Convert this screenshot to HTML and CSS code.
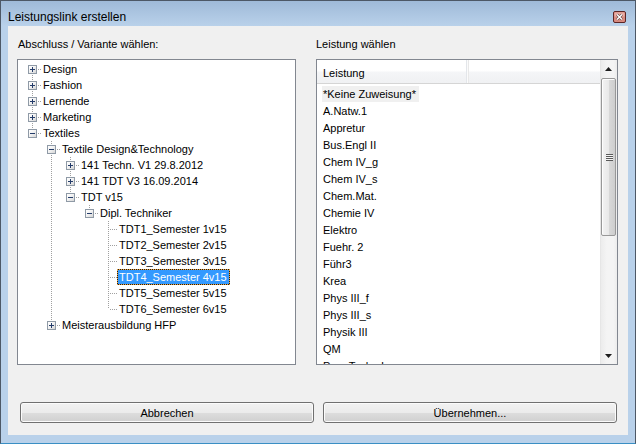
FILE: index.html
```html
<!DOCTYPE html>
<html lang="de">
<head>
<meta charset="utf-8">
<title>Leistungslink erstellen</title>
<link rel="stylesheet" href="styles.css">
</head>
<body>
<div class="window">
  <div class="titlebar">
    <span class="title">Leistungslink erstellen</span>
    <span class="close">
      <svg width="13" height="12" viewBox="0 0 13 12">
        <rect x="0.5" y="0.5" width="12" height="11" rx="1.5" fill="#d98b80" stroke="#5b2525"/>
        <rect x="1.5" y="1.5" width="10" height="4" fill="#e8aca4"/>
        <path d="M4 3.5 L9 8.5 M9 3.5 L4 8.5" stroke="#6a4a4a" stroke-width="2.6"/>
        <path d="M4 3.5 L9 8.5 M9 3.5 L4 8.5" stroke="#ffffff" stroke-width="1.4"/>
      </svg>
    </span>
  </div>
  <div class="client">
    <div class="panes">
      <section class="pane">
        <div class="label label-left">Abschluss / Variante wählen:</div>
        <div class="box tree">
          <div class="row"><span class="g first"><i class="exp plus"></i></span><span class="lbl">Design</span></div>
          <div class="row"><span class="g tee"><i class="exp plus"></i></span><span class="lbl">Fashion</span></div>
          <div class="row"><span class="g tee"><i class="exp plus"></i></span><span class="lbl">Lernende</span></div>
          <div class="row"><span class="g tee"><i class="exp plus"></i></span><span class="lbl">Marketing</span></div>
          <div class="row"><span class="g end"><i class="exp minus"></i></span><span class="lbl">Textiles</span></div>
          <div class="row"><span class="g"></span><span class="g tee"><i class="exp minus"></i></span><span class="lbl">Textile Design&amp;Technology</span></div>
          <div class="row"><span class="g"></span><span class="g v"></span><span class="g tee"><i class="exp plus"></i></span><span class="lbl">141 Techn. V1 29.8.2012</span></div>
          <div class="row"><span class="g"></span><span class="g v"></span><span class="g tee"><i class="exp plus"></i></span><span class="lbl">141 TDT V3 16.09.2014</span></div>
          <div class="row"><span class="g"></span><span class="g v"></span><span class="g end"><i class="exp minus"></i></span><span class="lbl">TDT v15</span></div>
          <div class="row"><span class="g"></span><span class="g v"></span><span class="g"></span><span class="g end"><i class="exp minus"></i></span><span class="lbl">Dipl. Techniker</span></div>
          <div class="row"><span class="g"></span><span class="g v"></span><span class="g"></span><span class="g"></span><span class="g tee"></span><span class="lbl">TDT1_Semester 1v15</span></div>
          <div class="row"><span class="g"></span><span class="g v"></span><span class="g"></span><span class="g"></span><span class="g tee"></span><span class="lbl">TDT2_Semester 2v15</span></div>
          <div class="row"><span class="g"></span><span class="g v"></span><span class="g"></span><span class="g"></span><span class="g tee"></span><span class="lbl">TDT3_Semester 3v15</span></div>
          <div class="row"><span class="g"></span><span class="g v"></span><span class="g"></span><span class="g"></span><span class="g tee"></span><span class="lbl selected">TDT4_Semester 4v15</span></div>
          <div class="row"><span class="g"></span><span class="g v"></span><span class="g"></span><span class="g"></span><span class="g tee"></span><span class="lbl">TDT5_Semester 5v15</span></div>
          <div class="row"><span class="g"></span><span class="g v"></span><span class="g"></span><span class="g"></span><span class="g end"></span><span class="lbl">TDT6_Semester 6v15</span></div>
          <div class="row"><span class="g"></span><span class="g end"><i class="exp plus"></i></span><span class="lbl">Meisterausbildung HFP</span></div>
        </div>
      </section>
      <section class="pane">
        <div class="label">Leistung wählen</div>
        <div class="box list">
          <div class="list-main">
            <div class="list-header"><span class="col">Leistung</span><span class="col-rest"></span></div>
            <div class="list-body">
              <div class="item"><span class="itxt current">*Keine Zuweisung*</span></div>
              <div class="item"><span class="itxt">A.Natw.1</span></div>
              <div class="item"><span class="itxt">Appretur</span></div>
              <div class="item"><span class="itxt">Bus.Engl II</span></div>
              <div class="item"><span class="itxt">Chem IV_g</span></div>
              <div class="item"><span class="itxt">Chem IV_s</span></div>
              <div class="item"><span class="itxt">Chem.Mat.</span></div>
              <div class="item"><span class="itxt">Chemie IV</span></div>
              <div class="item"><span class="itxt">Elektro</span></div>
              <div class="item"><span class="itxt">Fuehr. 2</span></div>
              <div class="item"><span class="itxt">Führ3</span></div>
              <div class="item"><span class="itxt">Krea</span></div>
              <div class="item"><span class="itxt">Phys III_f</span></div>
              <div class="item"><span class="itxt">Phys III_s</span></div>
              <div class="item"><span class="itxt">Physik III</span></div>
              <div class="item"><span class="itxt">QM</span></div>
              <div class="item"><span class="itxt">Proz.Techn.I</span></div>
            </div>
          </div>
          <div class="scrollbar">
            <div class="sb-btn">
              <svg width="7" height="4" viewBox="0 0 7 4"><polygon points="3.5,0 7,4 0,4" fill="#1e1e1e"/></svg>
            </div>
            <div class="sb-track">
              <div class="sb-thumb"><span class="grip"></span></div>
            </div>
            <div class="sb-btn">
              <svg width="7" height="4" viewBox="0 0 7 4"><polygon points="0,0 7,0 3.5,4" fill="#1e1e1e"/></svg>
            </div>
          </div>
        </div>
      </section>
    </div>
    <div class="buttons">
      <button class="btn" type="button">Abbrechen</button>
      <button class="btn" type="button">Übernehmen...</button>
    </div>
  </div>
</div>
</body>
</html>
```

FILE: styles.css
```css
* { box-sizing: border-box; }

html, body {
  margin: 0;
  padding: 0;
  background: #ffffff;
}

body {
  font-family: "Liberation Sans", Arial, sans-serif;
  font-size: 11px;
  color: #000;
}

.window {
  width: 636px;
  height: 444px;
  border: 1px solid #4d5866;
  border-bottom-color: #3a8fc4;
  background: #b9d1ea;
  display: flex;
  flex-direction: column;
}

.titlebar {
  height: 25px;
  flex: none;
  display: flex;
  justify-content: space-between;
  align-items: flex-start;
  padding: 9px 9px 0 7px;
  background: linear-gradient(#9fbad8, #b9d1ea);
}

.title {
  font-size: 12px;
  line-height: 14px;
  color: #000;
}

.close {
  display: block;
  width: 13px;
  height: 12px;
  margin-top: 1px;
}

.close svg { display: block; }

.client {
  margin: 0 7px 7px 7px;
  height: 409px;
  background: #f0f0f0;
  padding: 11px 10px 0 9px;
}

.panes {
  display: grid;
  grid-template-columns: 279px 302px;
  column-gap: 20px;
}

.label {
  line-height: 14px;
  height: 14px;
  white-space: nowrap;
}

.label-left { padding-left: 1px; }

.box {
  margin-top: 8px;
  height: 306px;
  border: 1px solid #828790;
  background: #ffffff;
  overflow: hidden;
}

/* ---------- tree ---------- */
.tree {
  padding: 1px 0 0 5px;
}

.row {
  display: flex;
  height: 16px;
  white-space: nowrap;
}

.g {
  position: relative;
  flex: none;
  width: 19px;
  height: 16px;
}

.g.v::before,
.g.tee::before,
.g.end::before,
.g.first::before {
  content: "";
  position: absolute;
  left: 9px;
  width: 1px;
  top: 0;
  bottom: 0;
  background: repeating-linear-gradient(to bottom, #a0a0a0 0 1px, transparent 1px 2px);
}

.g.end::before { bottom: 8px; }
.g.first::before { top: 8px; }

.g.tee::after,
.g.end::after,
.g.first::after {
  content: "";
  position: absolute;
  top: 8px;
  left: 10px;
  right: 0;
  height: 1px;
  background: repeating-linear-gradient(to right, transparent 0 1px, #a0a0a0 1px 2px);
}

.exp {
  position: absolute;
  z-index: 1;
  left: 5px;
  top: 4px;
  width: 9px;
  height: 9px;
  border: 1px solid #8f9aa6;
  background: linear-gradient(135deg, #ffffff 0%, #f3f3f3 45%, #d6d6d6 100%);
}

.exp::before {
  content: "";
  position: absolute;
  left: 1px;
  top: 3px;
  width: 5px;
  height: 1px;
  background: #243c6a;
}

.exp.plus::after {
  content: "";
  position: absolute;
  left: 3px;
  top: 1px;
  width: 1px;
  height: 5px;
  background: #243c6a;
}

.lbl {
  margin-left: -1px;
  height: 16px;
  line-height: 14px;
  padding: 0 2px 0 1px;
  border: 1px solid transparent;
}

.lbl.selected {
  color: #ffffff;
  border: 1px dotted #f0a33a;
  background: linear-gradient(#3399ff, #3399ff) padding-box, #1c1c1c border-box;
}

/* ---------- list ---------- */
.list {
  display: flex;
}

.list-main {
  flex: 1;
  min-width: 0;
  display: flex;
  flex-direction: column;
}

.list-header {
  flex: none;
  display: flex;
  height: 24px;
  border-bottom: 1px solid #d5d5d5;
  background: linear-gradient(#ffffff 0%, #ffffff 45%, #f4f5f7 55%, #f0f1f3 100%);
}

.col {
  width: 150px;
  padding: 3px 0 0 6px;
  line-height: 20px;
  border-right: 1px solid #e3e6ea;
  box-shadow: 1px 0 0 #fbfbfb, 2px 0 0 #e8e8e8;
}

.col-rest { flex: 1; }

.list-body {
  flex: 1;
  overflow: hidden;
  padding: 1px 0 0 5px;
}

.item {
  height: 17px;
  white-space: nowrap;
}

.itxt {
  display: inline-block;
  margin-top: 1px;
  height: 16px;
  line-height: 16px;
  padding: 0 3px 0 1px;
}

.itxt.current { background: #f0f0f0; }

/* ---------- scrollbar ---------- */
.scrollbar {
  flex: none;
  width: 17px;
  display: flex;
  flex-direction: column;
  background: linear-gradient(to right, #e0e0e0 0, #ececec 1px, #f4f4f4 40%, #f4f4f4 80%, #ececec 100%);
}

.sb-btn {
  flex: none;
  height: 17px;
  display: flex;
  align-items: center;
  justify-content: center;
}

.sb-btn svg { display: block; }

.sb-track {
  flex: 1;
  padding: 1px 1px 0 1px;
}

.sb-thumb {
  height: 158px;
  border: 1px solid #989898;
  border-radius: 2px;
  box-shadow: inset 1px 1px 0 #fdfdfd;
  background: linear-gradient(to right, #f3f3f3 0%, #e9e9e9 50%, #d9d9d9 52%, #cecece 100%);
  display: flex;
  align-items: center;
  justify-content: center;
}

.grip {
  display: block;
  width: 7px;
  height: 7px;
  margin-left: 1px;
  background: repeating-linear-gradient(to bottom, #5a5a5a 0 1px, #f4f4f4 1px 2px);
}

/* ---------- buttons ---------- */
.buttons {
  display: flex;
  gap: 9px;
  margin: 37px 0 0 3px;
}

.btn {
  width: 294px;
  height: 21px;
  padding: 0;
  font-family: "Liberation Sans", Arial, sans-serif;
  font-size: 11px;
  color: #000;
  border: 1px solid #707070;
  border-radius: 3px;
  box-shadow: inset 0 0 0 1px #fbfbfb;
  background: linear-gradient(#f2f2f2 0%, #ebebeb 50%, #dddddd 51%, #cfcfcf 100%);
}
```
